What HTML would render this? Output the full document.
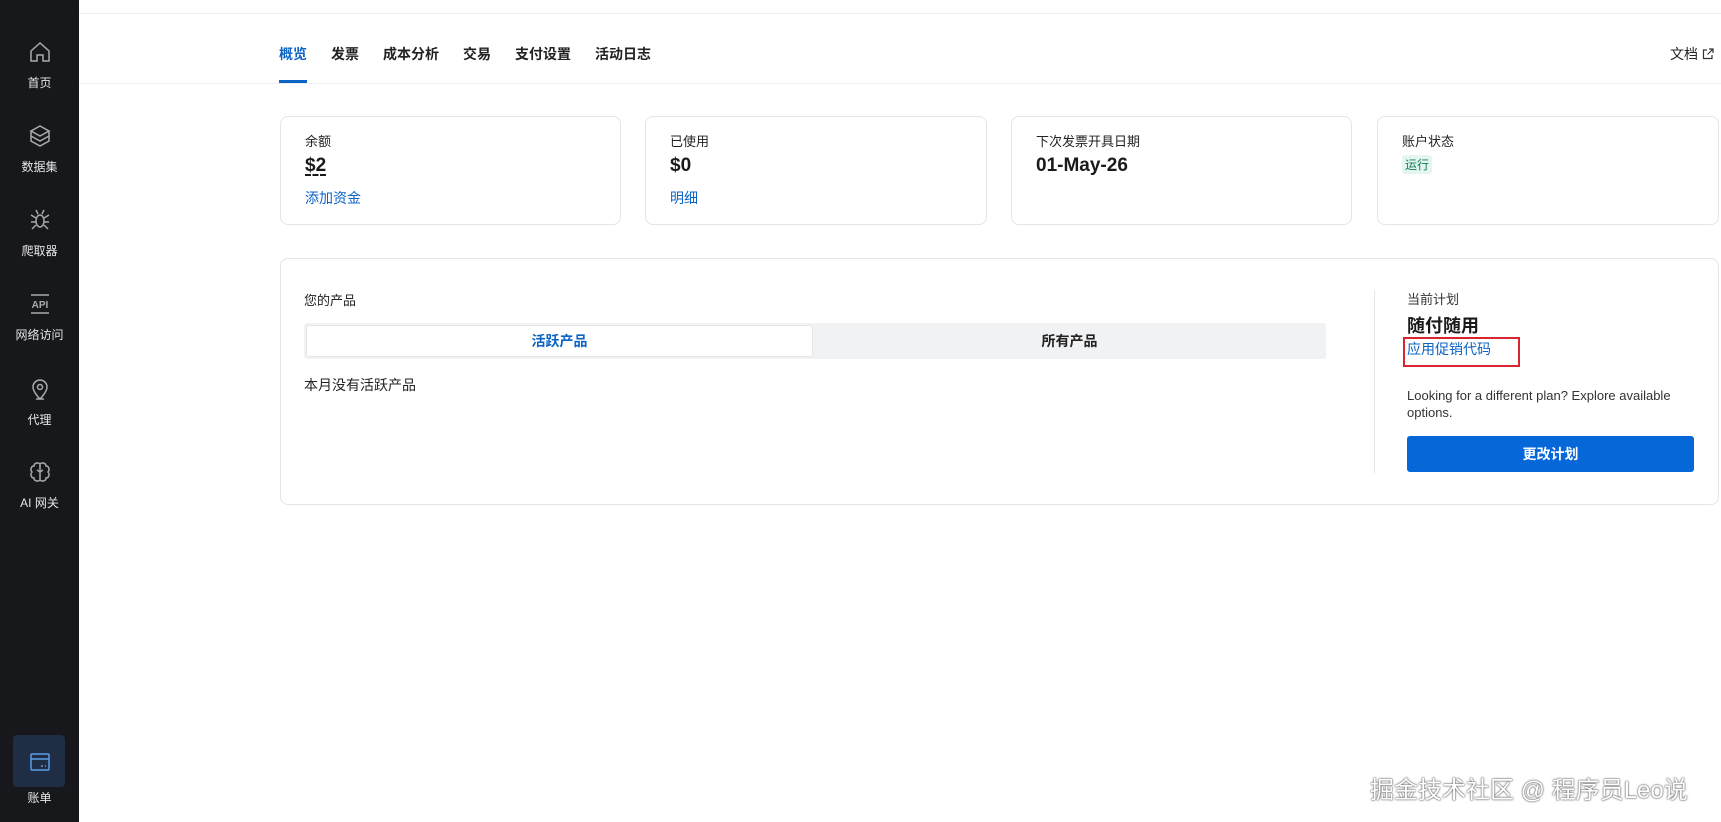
<!DOCTYPE html>
<html><head><meta charset="utf-8"><style>
*{margin:0;padding:0;box-sizing:border-box}
body{width:1721px;height:822px;position:relative;background:#fff;font-family:"Liberation Sans","Noto Sans CJK SC",sans-serif;color:#1a1a1a;overflow:hidden}
.side{position:absolute;left:0;top:0;width:79px;height:822px;background:#16181b}
.si{position:absolute;left:0;width:79px;text-align:center;color:#e6e6e6;font-size:12px}
.si svg{display:block;margin:0 auto}
.a{position:absolute;white-space:nowrap}
.card{position:absolute;top:116px;height:109px;border:1px solid #e3e5e8;border-radius:8px}
.lbl{position:absolute;left:24px;top:14px;font-size:13px;color:#222}
.val{position:absolute;left:24px;top:38px;font-size:19px;font-weight:bold;color:#1a1a1a}
.lnk{position:absolute;left:24px;top:71px;font-size:14px;color:#0b63c4}
.tab{position:absolute;top:44px;font-size:14px;font-weight:bold;color:#222}
</style></head><body>
<div class="side">
 <div class="si" style="top:40px"><svg width="24" height="24" viewBox="0 0 24 24" fill="none" stroke="#aaa" stroke-width="1.5"><path d="M3 11L12 3l9 8v10h-6v-6h-6v6H3z"/></svg><div style="margin-top:10px">首页</div></div>
 <div class="si" style="top:124px"><svg width="24" height="24" viewBox="0 0 24 24" fill="none" stroke="#aaa" stroke-width="1.5"><path d="M12 2l9 5-9 5-9-5z M3 12l9 5 9-5 M3 7v10l9 5 9-5V7"/></svg><div style="margin-top:10px">数据集</div></div>
 <div class="si" style="top:208px"><svg width="24" height="24" viewBox="0 0 24 24" fill="none" stroke="#aaa" stroke-width="1.5"><ellipse cx="12" cy="13" rx="4" ry="6"/><path d="M8 10L3 7M8 14H3M8 17l-4 4M16 10l5-3M16 14h5M16 17l4 4M10 6L8 2M14 6l2-4"/></svg><div style="margin-top:10px">爬取器</div></div>
 <div class="si" style="top:292px"><svg width="24" height="24" viewBox="0 0 24 24"><path d="M3 3h18M3 21h18" stroke="#aaa" stroke-width="1.5"/><text x="12" y="16" font-size="10" font-weight="bold" fill="#aaa" text-anchor="middle" font-family="Liberation Sans">API</text></svg><div style="margin-top:10px">网络访问</div></div>
 <div class="si" style="top:377px"><svg width="24" height="24" viewBox="0 0 24 24" fill="none" stroke="#aaa" stroke-width="1.5"><path d="M12 22s-7-7-7-12a7 7 0 0114 0c0 5-7 12-7 12z"/><circle cx="12" cy="10" r="2.5"/><path d="M8 22h8"/></svg><div style="margin-top:10px">代理</div></div>
 <div class="si" style="top:460px"><svg width="24" height="24" viewBox="0 0 24 24" fill="none" stroke="#aaa" stroke-width="1.5"><path d="M12 4v17M12 4c-2-2-6-1-6 2-3 0-4 4-2 6-2 2-1 6 2 6 0 3 4 4 6 2M12 4c2-2 6-1 6 2 3 0 4 4 2 6 2 2 1 6-2 6 0 3-4 4-6 2M9 10l3 2 3-2"/></svg><div style="margin-top:10px">AI 网关</div></div>
 <div style="position:absolute;left:13px;top:735px;width:52px;height:52px;background:#1f2e45;border-radius:4px"></div>
 <div class="si" style="top:750px"><svg width="24" height="24" viewBox="0 0 24 24" fill="none" stroke="#5b9be6" stroke-width="1.5"><rect x="3" y="4" width="18" height="16" rx="1"/><path d="M3 9h18M13 16h2M17 16h1"/></svg><div style="margin-top:15px">账单</div></div>
</div>
<div class="a" style="left:79px;right:0;top:13px;height:1px;background:#eceef0"></div>
<div class="a" style="left:79px;right:0;top:83px;height:1px;background:#eceef0"></div>
<div class="tab" style="left:279px;color:#0b63c4">概览</div>
<div class="a" style="left:279px;top:80px;width:28px;height:3px;background:#0b63c4"></div>
<div class="tab" style="left:331px">发票</div>
<div class="tab" style="left:383px">成本分析</div>
<div class="tab" style="left:463px">交易</div>
<div class="tab" style="left:515px">支付设置</div>
<div class="tab" style="left:595px">活动日志</div>
<div class="a" style="left:1670px;top:44px;font-size:14px;color:#222">文档 <svg width="12" height="12" viewBox="0 0 12 12" fill="none" stroke="#333" stroke-width="1.2" style="vertical-align:-1px"><path d="M5 2H1.5v8.5H10V7M7 1h4v4M11 1L5.5 6.5"/></svg></div>

<div class="card" style="left:280px;width:341px"><div class="lbl">余额</div><div class="val" style="text-decoration:underline dashed;text-underline-offset:4px">$2</div><div class="lnk">添加资金</div></div>
<div class="card" style="left:645px;width:342px"><div class="lbl">已使用</div><div class="val">$0</div><div class="lnk">明细</div></div>
<div class="card" style="left:1011px;width:341px"><div class="lbl">下次发票开具日期</div><div class="val">01-May-26</div></div>
<div class="card" style="left:1377px;width:342px"><div class="lbl">账户状态</div><div class="a" style="left:24px;top:38px;font-size:12px;color:#117a5c;background:#e4f6ef;padding:1px 3px;border-radius:3px">运行</div></div>

<div class="a" style="left:280px;top:258px;width:1439px;height:247px;border:1px solid #e3e5e8;border-radius:8px"></div>
<div class="a" style="left:304px;top:290px;font-size:13px;color:#222">您的产品</div>
<div class="a" style="left:304px;top:323px;width:1022px;height:36px;background:#f1f2f4;border-radius:3px"></div>
<div class="a" style="left:306px;top:325px;width:507px;height:32px;background:#fff;border:1px solid #e3e5e8;border-radius:3px;text-align:center;line-height:30px;font-size:14px;font-weight:bold;color:#0b63c4">活跃产品</div>
<div class="a" style="left:813px;top:325px;width:513px;height:32px;text-align:center;line-height:32px;font-size:14px;font-weight:bold;color:#222">所有产品</div>
<div class="a" style="left:304px;top:375px;font-size:14px;color:#222">本月没有活跃产品</div>
<div class="a" style="left:1374px;top:290px;width:1px;height:183px;background:#e3e5e8"></div>
<div class="a" style="left:1407px;top:289px;font-size:13px;color:#333">当前计划</div>
<div class="a" style="left:1407px;top:312px;font-size:18px;font-weight:bold;color:#1a1a1a">随付随用</div>
<div class="a" style="left:1403px;top:337px;width:117px;height:30px;border:2px solid #d9262e"></div>
<div class="a" style="left:1407px;top:339px;font-size:14px;color:#0b63c4">应用促销代码</div>
<div class="a" style="left:1407px;top:387px;font-size:13px;line-height:17px;color:#333;white-space:normal;width:290px">Looking for a different plan? Explore available options.</div>
<div class="a" style="left:1407px;top:436px;width:287px;height:36px;background:#0567d8;border-radius:3px;color:#fff;text-align:center;line-height:36px;font-size:14px;font-weight:bold">更改计划</div>
<div class="a" style="left:1370px;top:770px;font-size:24px;color:#fff;text-shadow:0 0 2px #555,0 0 1px #333">掘金技术社区 @ 程序员Leo说</div>
</body></html>
